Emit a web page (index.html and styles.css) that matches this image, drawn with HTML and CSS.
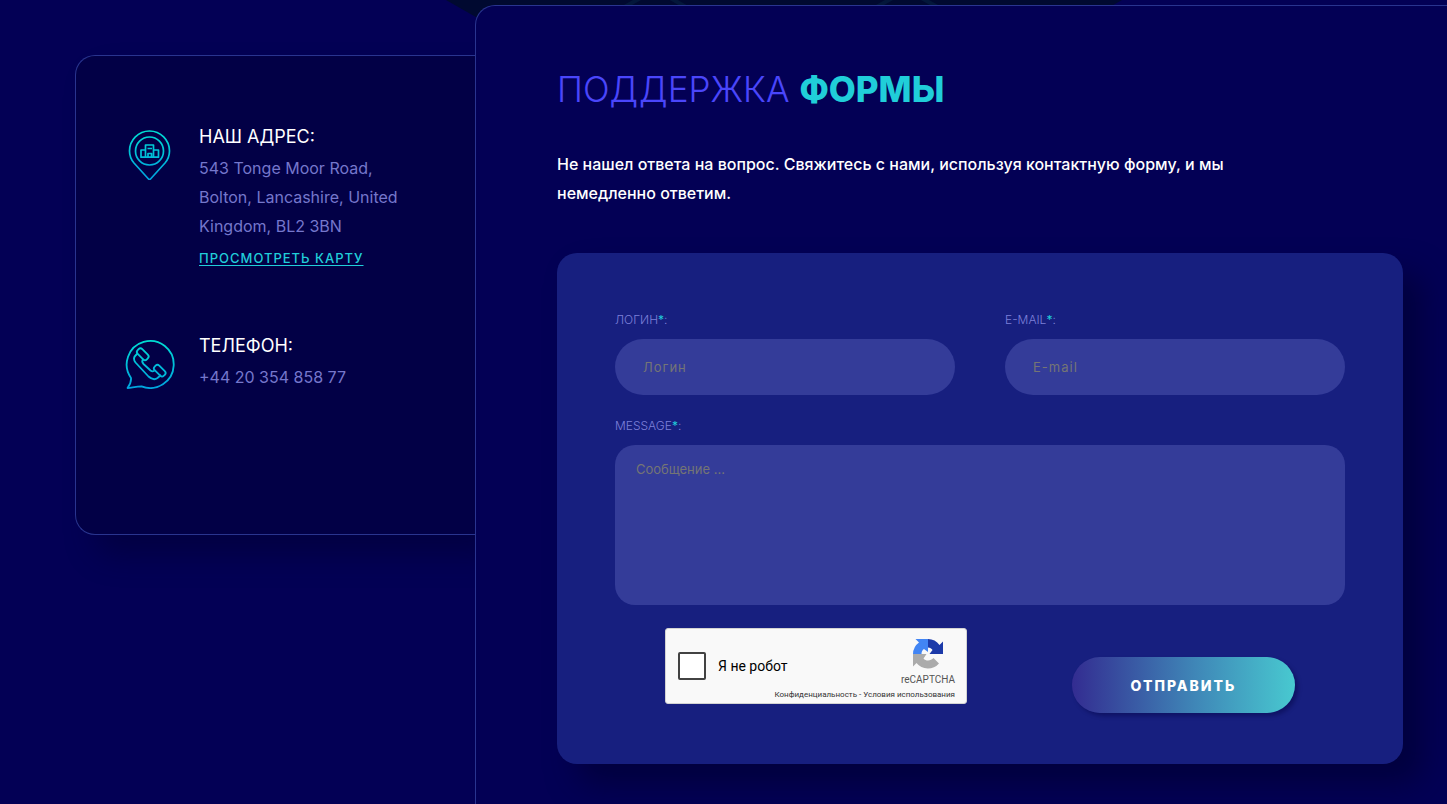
FILE: index.html
```
<!DOCTYPE html>
<html lang="ru">
<head>
    <meta charset="UTF-8">
    <meta name="viewport" content="width=device-width, initial-scale=1.0">
    <title>Поддержка</title>
    <link rel="stylesheet" href="styles.css">
</head>
<body>
    <svg class="bg-shape" width="720" height="40" viewBox="0 0 720 40" aria-hidden="true">
        <path d="M6 0H682L612 40H76Z" fill="#000930"/>
        <path d="M206 -5L170 15M225 -5L260 15M458 -5L422 15M476 -5L512 15" stroke="#03173a" stroke-width="4"/>
    </svg>

    <main class="support">
        <aside class="contacts">
            <div class="contact">
                <svg class="contact-icon" viewBox="0 0 50 50" fill="none" stroke="url(#pinGrad)" stroke-width="1.7" stroke-linejoin="round" aria-hidden="true">
                    <defs>
                        <linearGradient id="pinGrad" gradientUnits="userSpaceOnUse" x1="0" y1="0" x2="0" y2="50">
                            <stop offset="0" stop-color="#00ded2"/>
                            <stop offset="1" stop-color="#00a3df"/>
                        </linearGradient>
                    </defs>
                    <path d="M24.500 1A20 20 0 0 0 4.500 21C4.500 25.500 6 29.500 9 33L23.500 49Q24.500 50 25.500 49L40 33C43 29.500 44.500 25.500 44.500 21A20 20 0 0 0 24.500 1Z"/>
                    <circle cx="24.500" cy="21" r="14"/>
                    <path d="M20.500 27V15H28.500V27M20.500 20H16V27.200H33.500V20H28.500M23 27V23.500H26.500V27M22.500 18.500H27"/>
                </svg>
                <div class="contact-text">
                    <h2>Наш адрес:</h2>
                    <p>543 Tonge Moor Road, Bolton, Lancashire, United Kingdom, BL2 3BN</p>
                    <a href="#map">Просмотреть карту</a>
                </div>
            </div>

            <div class="contact">
                <svg class="contact-icon" viewBox="0 0 50 50" fill="none" stroke="url(#phoneGrad)" stroke-width="1.8" stroke-linejoin="round" aria-hidden="true">
                    <defs>
                        <linearGradient id="phoneGrad" gradientUnits="userSpaceOnUse" x1="0" y1="0" x2="0" y2="50">
                            <stop offset="0" stop-color="#00ded2"/>
                            <stop offset="1" stop-color="#00a3df"/>
                        </linearGradient>
                    </defs>
                    <path d="M6 39A23.500 23.500 0 1 1 16.500 47.300C12 47.500 7 48.500 2.500 49Q6.500 44 6 39Z"/>
                    <path d="M12.500 14.500L10.500 16.500Q7.500 19.500 10.500 23.500L23.500 37.500Q28.500 42 32.500 39L36 36M18.500 20Q16 22.500 18.500 25L25.500 31.500Q28 33.500 30 31"/>
                    <rect x="11.200" y="12" width="13" height="6.500" rx="2.600" transform="rotate(45 17.700 15.300)"/>
                    <rect x="28.200" y="28.400" width="13" height="6.500" rx="2.600" transform="rotate(45 34.700 31.700)"/>
                </svg>
                <div class="contact-text">
                    <h2>Телефон:</h2>
                    <p>+44 20 354 858 77</p>
                </div>
            </div>
        </aside>

        <section class="panel">
            <h1>Поддержка <strong>формы</strong></h1>
            <p class="intro">Не нашел ответа на вопрос. Свяжитесь с нами, используя контактную форму, и мы немедленно ответим.</p>

            <form class="form">
                <div class="form-grid">
                    <div class="field">
                        <label for="login">Логин<b>*</b>:</label>
                        <input type="text" id="login" placeholder="Логин">
                    </div>
                    <div class="field">
                        <label for="email">E-mail<b>*</b>:</label>
                        <input type="email" id="email" placeholder="E-mail">
                    </div>
                    <div class="field field-wide">
                        <label for="message">Message<b>*</b>:</label>
                        <textarea id="message" placeholder="Сообщение ..."></textarea>
                    </div>
                </div>

                <div class="form-footer">
                    <div class="captcha">
                        <div class="captcha-check">
                            <input type="checkbox" id="robot">
                            <label for="robot">Я не робот</label>
                        </div>
                        <div class="captcha-brand">
                            <svg width="32" height="32" viewBox="0 0 64 64" aria-hidden="true">
                                <path fill="#1c3aa9" d="M62 32V7L55 14A29 29 0 0 0 32 2V19C36 19 39 21 41 24L35 32Z"/>
                                <path fill="#4285f4" d="M32 2H7L14 9A29 29 0 0 0 2 32H19C19 27 21 24 24 22L32 28Z"/>
                                <path fill="#ababab" d="M2 32V57L9 50A29 29 0 0 0 54 51L43 40C38 46 28 47 23 41L29 32Z"/>
                            </svg>
                            <span>reCAPTCHA</span>
                        </div>
                        <div class="captcha-links">
                            <a href="#privacy">Конфиденциальность</a> - <a href="#terms">Условия использования</a>
                        </div>
                    </div>
                    <button type="submit">Отправить</button>
                </div>
            </form>
        </section>
    </main>
</body>
</html>
```
FILE: styles.css
```
* {
    box-sizing: border-box;
}

body {
    margin: 0;
    min-height: 100vh;
    background: #030055;
    font-family: Inter, "Liberation Sans", sans-serif;
    color: #fff;
    overflow: hidden;
}

/* dark shape that shows above the panel */
.bg-shape {
    position: absolute;
    top: 0;
    left: 440px;
}

.support {
    position: relative;
    display: flex;
    align-items: flex-start;
    padding: 5px 0 0 75px;
}

.contacts {
    flex: 0 0 400px;
    min-height: 480px;
    margin-top: 50px;
    padding: 68px 50px 50px 49px;
    background: #020046;
    border: 1px solid #29348f;
    border-right: none;
    border-radius: 20px 0 0 20px;
    box-shadow: 20px 20px 30px rgba(0, 0, 40, 0.4);
}

.contact {
    display: flex;
    gap: 24px;
    margin-bottom: 62px;
}

.contact-icon {
    flex: 0 0 50px;
    height: 50px;
    margin-top: 6px;
}

.contact h2 {
    margin: 0 0 4px;
    font-size: 18px;
    line-height: 26px;
    font-weight: 400;
    text-transform: uppercase;
}

.contact p {
    margin: 0;
    font-size: 16px;
    line-height: 29px;
    color: #7577cc;
}

.contact a {
    display: inline-block;
    margin-top: 4px;
    font-size: 13px;
    line-height: 26px;
    font-weight: 500;
    letter-spacing: 1px;
    text-transform: uppercase;
    text-underline-offset: 2px;
    color: #20ced9;
}

.panel {
    flex: 1;
    min-width: 0;
    min-height: calc(100vh - 5px);
    padding: 58px 44px 40px 81px;
    background: #030055;
    border: 1px solid #29348f;
    border-width: 1px 0 0 1px;
    border-radius: 20px 0 0 0;
}

h1 {
    margin: 0;
    font-size: 35px;
    line-height: 50px;
    font-weight: 300;
    text-transform: uppercase;
    color: #4a46fb;
}

h1 strong {
    font-weight: 800;
    color: #20ced9;
}

.intro {
    max-width: 700px;
    margin: 36px 0 45px;
    font-size: 16px;
    line-height: 29px;
    font-weight: 500;
}

.form {
    padding: 58px;
    padding-bottom: 51px;
    background: #171f7f;
    border-radius: 20px;
    box-shadow: 20px 20px 30px rgba(0, 0, 40, 0.5);
}

.form-grid {
    display: grid;
    grid-template-columns: 1fr 1fr;
    gap: 22px 50px;
}

.field {
    display: flex;
    flex-direction: column;
    gap: 10px;
}

.field-wide {
    grid-column: 1 / -1;
}

.field label {
    font-size: 12px;
    line-height: 18px;
    font-weight: 300;
    text-transform: uppercase;
    color: #7d80da;
}

.field label b {
    color: #20ced9;
}

.field input,
.field textarea {
    width: 100%;
    border: none;
    outline: none;
    background: #343c99;
    color: #fff;
    font-family: inherit;
    font-size: 13px;
}

.field input {
    height: 56px;
    padding: 0 28px;
    border-radius: 28px;
    letter-spacing: 1px;
}

.field textarea {
    height: 160px;
    padding: 15px 21px;
    border-radius: 20px;
    line-height: 18px;
    resize: none;
}

.field input::placeholder,
.field textarea::placeholder {
    color: #757575;
}

.form-footer {
    display: flex;
    justify-content: space-between;
    align-items: flex-end;
    padding: 0 50px;
    margin-top: 23px;
}

.captcha {
    display: grid;
    grid-template-columns: 1fr auto;
    width: 302px;
    height: 76px;
    margin-bottom: 9px;
    padding: 9px 11px 2px 12px;
    background: #f9f9f9;
    border: 1px solid #d3d3d3;
    border-radius: 3px;
    font-family: Roboto, sans-serif;
    color: #000;
}

.captcha-check {
    display: flex;
    align-items: center;
    gap: 12px;
    padding-top: 4px;
    font-size: 14px;
}

.captcha-check input {
    appearance: none;
    width: 28px;
    height: 28px;
    margin: 0;
    background: #fff;
    border: 2px solid #424242;
    border-radius: 2px;
}

.captcha-brand {
    display: flex;
    flex-direction: column;
    align-items: center;
    gap: 2px;
    font-size: 10px;
    line-height: 16px;
    color: #555;
}

.captcha-links {
    grid-column: 1 / -1;
    font-size: 8px;
    line-height: 10px;
    text-align: right;
    color: #333;
}

.captcha-links a {
    color: inherit;
    text-decoration: none;
}

button {
    width: 223px;
    height: 56px;
    border: none;
    border-radius: 28px;
    background: linear-gradient(90deg, #332c91, #3f86b7 55%, #48c9d0);
    box-shadow: 3px 3px 4px rgba(0, 0, 60, 0.4);
    color: #fff;
    font-family: inherit;
    font-size: 14px;
    font-weight: 800;
    letter-spacing: 2px;
    text-transform: uppercase;
    cursor: pointer;
}
```
